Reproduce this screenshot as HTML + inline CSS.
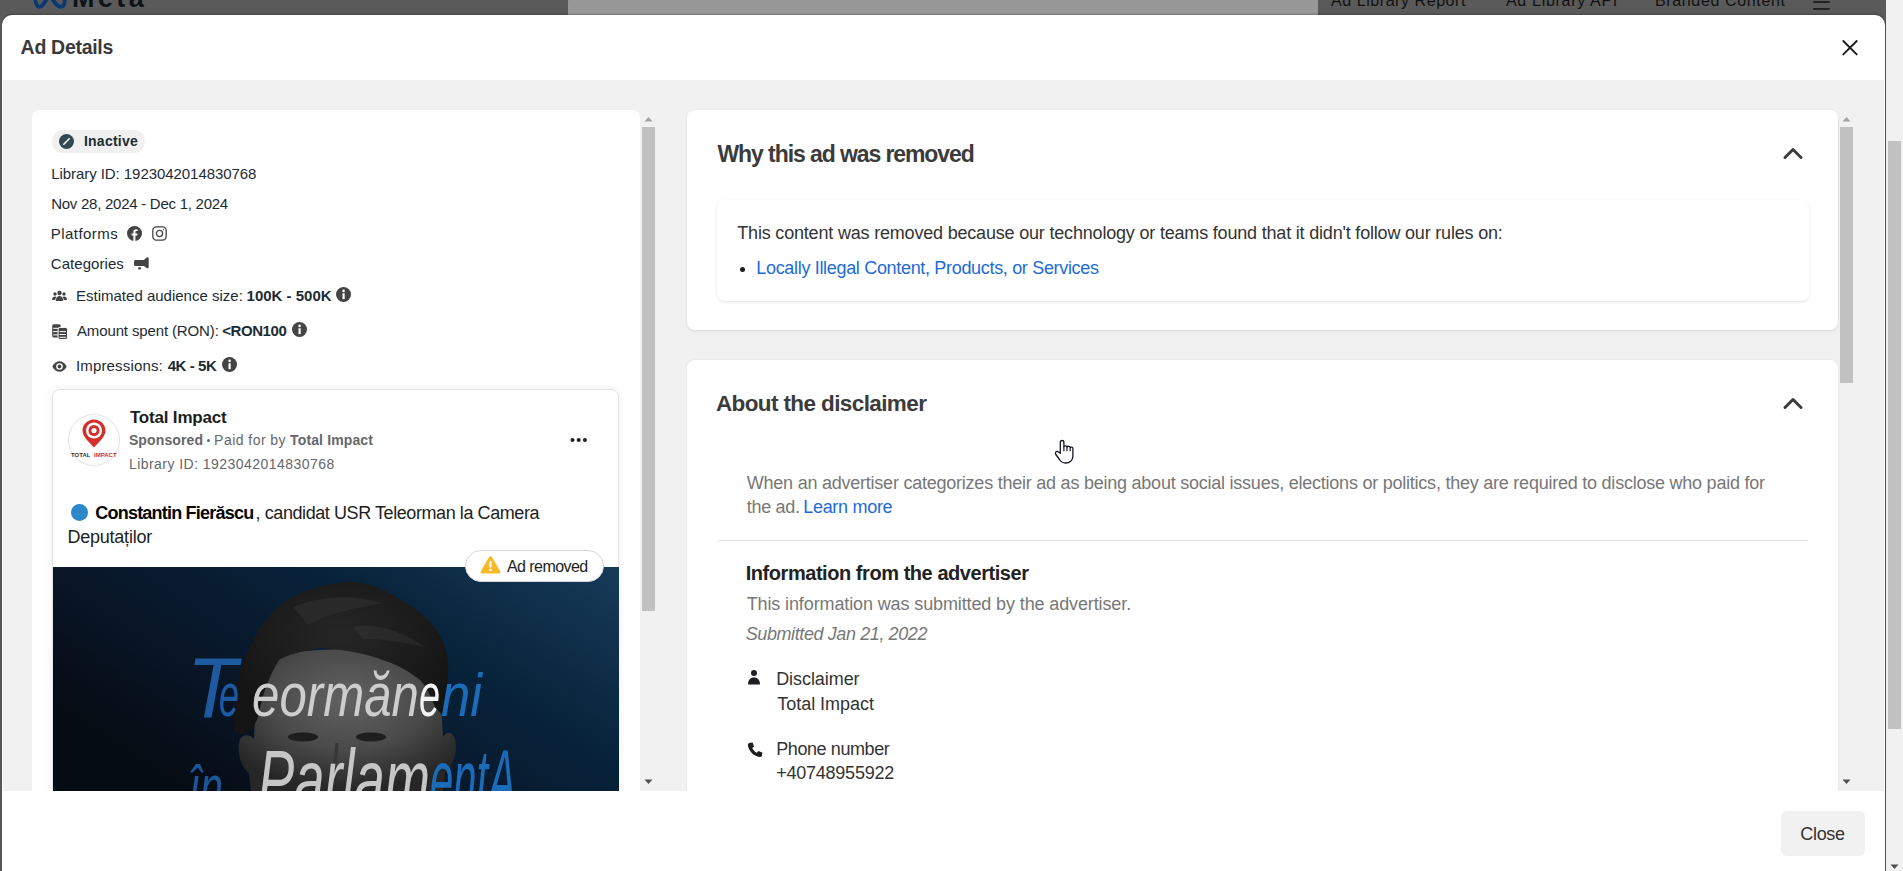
<!DOCTYPE html>
<html><head><meta charset="utf-8"><style>
html,body{margin:0;padding:0}
body{width:1903px;height:871px;overflow:hidden;position:relative;background:#5a5a5a;font-family:"Liberation Sans",sans-serif}
.t{position:absolute;white-space:nowrap;font-family:"Liberation Sans",sans-serif}
.abs{position:absolute}
</style></head><body>
<!-- dimmed page behind -->
<div class="abs" style="left:568px;top:-8px;width:750px;height:40px;background:#989898;border-radius:10px"></div>
<svg class="abs" style="left:0px;top:0px" width="80" height="15" viewBox="0 0 80 15"><path d="M34.9,-8 C34.9,2 36.5,6.8 39.5,6.8 C42.5,6.8 45,2 49.5,-5 M49,-7 C53,0 56.5,6.8 60.5,6.8 C63.5,6.8 65,3 65,-2 L65,-8" fill="none" stroke="#0a3873" stroke-width="3.9" stroke-linecap="round"/></svg>
<div class='t' style='left:72.00px;top:-15.16px;font-size:27px;line-height:27px;font-weight:700;font-style:normal;letter-spacing:3.400px;color:#0e1316'>Meta</div><div class='t' style='left:1331.00px;top:-6.84px;font-size:16px;line-height:16px;font-weight:400;font-style:normal;letter-spacing:0.562px;color:#121212'>Ad Library Report</div><div class='t' style='left:1506.00px;top:-6.84px;font-size:16px;line-height:16px;font-weight:400;font-style:normal;letter-spacing:0.692px;color:#121212'>Ad Library API</div><div class='t' style='left:1655.00px;top:-6.84px;font-size:16px;line-height:16px;font-weight:400;font-style:normal;letter-spacing:0.643px;color:#121212'>Branded Content</div>
<div class="abs" style="left:1813px;top:0.6px;width:16.5px;height:2px;background:#222;border-radius:1px"></div>
<div class="abs" style="left:1813px;top:8.1px;width:16.5px;height:2px;background:#222;border-radius:1px"></div>
<!-- page scrollbar -->
<div class="abs" style="left:1886px;top:0;width:17px;height:871px;background:#f1f1f1"></div>
<div class="abs" style="left:1888px;top:141px;width:13px;height:588px;background:#c1c1c1"></div>
<svg class="abs" style="left:1886px;top:854px" width="17" height="17"><path d="M4.5 10.5 L8.5 15 L12.5 10.5 Z" fill="#505050"/></svg>

<!-- modal -->
<div class="abs" style="left:2px;top:15px;width:1883px;height:900px;background:#fff;border-radius:10px 10px 0 0;box-shadow:0 -1px 2px rgba(0,0,0,0.25)"></div>
<div class="abs" style="left:3px;top:80px;width:1881px;height:711px;background:#f1f1f1"></div>
<svg class="abs" style="left:1835px;top:33px" width="30" height="30"><path d="M8.3 8 L21.7 21.4 M21.7 8 L8.3 21.4" stroke="#1c1e21" stroke-width="1.9" stroke-linecap="round"/></svg>

<!-- left panel -->
<div class="abs" style="left:32px;top:110px;width:608px;height:681px;background:#fff;border-radius:8px 8px 0 0"></div>
<div style='position:absolute;left:640px;top:110px;width:17px;height:681px;background:#f1f1f1'></div><div style='position:absolute;left:642px;top:127px;width:13px;height:484px;background:#c1c1c1'></div><svg style='position:absolute;left:640px;top:110px' width='17' height='17'><path d='M4.5 11.5 L8.5 7 L12.5 11.5 Z' fill='#a3a3a3'/></svg><svg style='position:absolute;left:640px;top:774px' width='17' height='17'><path d='M4.5 5.5 L8.5 10 L12.5 5.5 Z' fill='#505050'/></svg>
<div class="abs" style="left:52px;top:130px;width:93px;height:23px;background:#f0f0f0;border-radius:12px"></div>
<svg class="abs" style="left:59px;top:134px" width="15" height="15" viewBox="0 0 15 15"><circle cx="7.5" cy="7.5" r="7.5" fill="#344854"/><path d="M4.8 10.2 L10.2 4.8" stroke="#fff" stroke-width="1.6" stroke-linecap="round"/></svg>
<!-- platform icons -->
<svg class="abs" style="left:127px;top:226px" width="15" height="15" viewBox="0 0 15 15"><circle cx="7.5" cy="7.5" r="7.5" fill="#444444"/><path d="M8.4 15 V9.4 H10.2 L10.5 7.4 H8.4 V6.2 C8.4 5.6 8.7 5.1 9.6 5.1 H10.6 V3.4 C10.3 3.3 9.7 3.2 9 3.2 C7.4 3.2 6.4 4.2 6.4 5.9 V7.4 H4.6 V9.4 H6.4 V15 Z" fill="#fff"/></svg>
<svg class="abs" style="left:152px;top:226px" width="15" height="15" viewBox="0 0 15 15"><rect x="0.8" y="0.8" width="13.4" height="13.4" rx="3.6" fill="none" stroke="#444" stroke-width="1.3"/><circle cx="7.5" cy="7.5" r="3.1" fill="none" stroke="#444" stroke-width="1.3"/><circle cx="11.5" cy="3.5" r="0.7" fill="#444"/></svg>
<svg class="abs" style="left:133px;top:257px" width="17" height="14" viewBox="0 0 17 14"><path d="M2.5,2.9 L10.8,2.9 L14,0.3 C15.2,0.1 15.7,0.6 15.7,1.5 L15.7,10 C15.7,11 15.2,11.4 14,11.2 L10.8,8.9 L2.5,8.9 C1.6,8.9 1,8.3 1,7.4 L1,4.4 C1,3.5 1.6,2.9 2.5,2.9 Z" fill="#444"/><ellipse cx="6.6" cy="11.4" rx="1.7" ry="1.1" fill="#444"/></svg>
<!-- stats icons -->
<svg class="abs" style="left:52px;top:290px" width="15" height="12" viewBox="0 0 15 12"><circle cx="7.5" cy="3" r="2.2" fill="#444444"/><circle cx="3" cy="4" r="1.7" fill="#444444"/><circle cx="12" cy="4" r="1.7" fill="#444444"/><path d="M3.8 11 C3.8 7.5 5.5 6 7.5 6 C9.5 6 11.2 7.5 11.2 11 Z" fill="#444444"/><path d="M0 10 C0 7.5 1.2 6.5 3 6.5 C3.8 6.5 4.3 6.8 4.5 7 C3.6 8 3.3 9 3.3 10 Z" fill="#444444"/><path d="M15 10 C15 7.5 13.8 6.5 12 6.5 C11.2 6.5 10.7 6.8 10.5 7 C11.4 8 11.7 9 11.7 10 Z" fill="#444444"/></svg>
<svg class="abs" style="left:52px;top:324px" width="16" height="16" viewBox="0 0 16 16"><rect x="0.2" y="0.2" width="8.5" height="13.2" rx="1.6" fill="#444"/><path d="M1.2 4.3 H7.7 M1.2 7.6 H7.7 M1.2 10.9 H6.6" stroke="#fff" stroke-width="1"/><rect x="6.1" y="3.4" width="9.4" height="12.1" rx="1.8" fill="#444" stroke="#fff" stroke-width="1"/><path d="M7.6 7.6 H14 M7.6 10.5 H14 M7.6 13.3 H14" stroke="#fff" stroke-width="1"/></svg>
<svg class="abs" style="left:52px;top:361px" width="15" height="11" viewBox="0 0 15 11"><path d="M0.3 5.5 C2.3 1.6 4.9 0.3 7.5 0.3 C10.1 0.3 12.7 1.6 14.7 5.5 C12.7 9.4 10.1 10.7 7.5 10.7 C4.9 10.7 2.3 9.4 0.3 5.5 Z" fill="#444"/><circle cx="7.5" cy="5.5" r="3.3" fill="#fff"/><circle cx="7.5" cy="5.5" r="1.9" fill="#444"/></svg>
<svg class="abs" style="left:336px;top:287px" width="15" height="15" viewBox="0 0 15 15"><circle cx="7.5" cy="7.5" r="7.5" fill="#444444"/><rect x="6.5" y="6.3" width="2.2" height="5.8" fill="#fff"/><circle cx="7.6" cy="3.9" r="1.3" fill="#fff"/></svg>
<svg class="abs" style="left:292px;top:322px" width="15" height="15" viewBox="0 0 15 15"><circle cx="7.5" cy="7.5" r="7.5" fill="#444444"/><rect x="6.5" y="6.3" width="2.2" height="5.8" fill="#fff"/><circle cx="7.6" cy="3.9" r="1.3" fill="#fff"/></svg>
<svg class="abs" style="left:222px;top:357px" width="15" height="15" viewBox="0 0 15 15"><circle cx="7.5" cy="7.5" r="7.5" fill="#444444"/><rect x="6.5" y="6.3" width="2.2" height="5.8" fill="#fff"/><circle cx="7.6" cy="3.9" r="1.3" fill="#fff"/></svg>

<!-- ad card -->
<div class="abs" style="left:52px;top:389px;width:567px;height:420px;background:#fff;border:1px solid #e3e5e8;border-radius:8px;box-shadow:0 0 8px rgba(0,0,0,0.07);box-sizing:border-box"></div>
<div class="abs" style="left:68px;top:414px;width:52px;height:52px;border-radius:50%;border:1px solid #e3e3e3;box-sizing:border-box;background:#fff"></div>
<svg class="abs" style="left:68px;top:414px" width="52" height="52" viewBox="0 0 52 52">
 <path d="M26 5.5 C19.5 5.5 14.5 10.5 14.5 16.5 C14.5 23 22 29 26 33.5 C30 29 37.5 23 37.5 16.5 C37.5 10.5 32.5 5.5 26 5.5 Z" fill="#d32f2f"/>
 <circle cx="26" cy="16.5" r="8" fill="#fff"/><circle cx="26" cy="16.5" r="5.5" fill="#d32f2f"/><circle cx="26" cy="16.5" r="2.6" fill="#fff"/>
 <text x="3" y="43" font-family="Liberation Sans" font-size="6" font-weight="700" fill="#333">TOTAL</text>
 <text x="26" y="43" font-family="Liberation Sans" font-size="6" font-weight="700" fill="#d32f2f">IMPACT</text>
</svg>
<svg class="abs" style="left:570px;top:436px" width="18" height="8"><circle cx="2.5" cy="4" r="2" fill="#1c1e21"/><circle cx="8.7" cy="4" r="2" fill="#1c1e21"/><circle cx="14.9" cy="4" r="2" fill="#1c1e21"/></svg>
<div class="abs" style="left:207.3px;top:438.8px;width:3px;height:3px;border-radius:50%;background:#65676b"></div>
<div class="abs" style="left:71px;top:504px;width:17px;height:17px;border-radius:50%;background:#2d88c9"></div>
<!-- ad image -->
<svg class="abs" style="left:53px;top:567px" width="566" height="224" viewBox="0 0 566 224">
 <defs>
  <linearGradient id="bgg" x1="0" y1="0.6" x2="1" y2="0">
   <stop offset="0" stop-color="#060c14"/><stop offset="0.3" stop-color="#09172a"/><stop offset="0.6" stop-color="#072239"/><stop offset="1" stop-color="#173b5a"/>
  </linearGradient>
  <radialGradient id="face" cx="0.5" cy="0.35" r="0.65">
   <stop offset="0" stop-color="#626262"/><stop offset="0.55" stop-color="#4a4a4a"/><stop offset="1" stop-color="#262626"/>
  </radialGradient>
  <radialGradient id="hair" cx="0.5" cy="0.35" r="0.6">
   <stop offset="0" stop-color="#262626"/><stop offset="1" stop-color="#141414"/>
  </radialGradient>
 </defs>
 <rect width="566" height="224" fill="url(#bgg)"/>
 <path d="M198 224 L196 206 C188 200 183 184 187 172 C191 166 197 168 201 172 L204 95 C232 78 356 78 386 95 L390 170 C394 164 399 164 402 172 C405 184 400 200 392 206 L390 224 Z" fill="url(#face)"/>
 <path d="M181 165 C181 130 186 100 195 85 C203 65 212 52 225 40 C242 26 262 18 298 14.5 C322 16 348 30 371 49 C386 62 393 78 395 94 C396 112 394 130 391 150 L382 140 C376 124 370 114 363 110 C350 100 336 94 310 87 C290 83 272 80 264 82 C248 84 234 88 226 93 C217 108 210 124 205 150 C200 165 190 170 181 165 Z" fill="url(#hair)"/>
 <path d="M240 40 C262 30 300 26 330 36 C310 40 280 44 255 58 Z" fill="#363636" opacity="0.45"/>
 <path d="M300 60 C325 55 350 65 372 80 C350 75 330 72 310 72 Z" fill="#3a3a3a" opacity="0.4"/>
 <ellipse cx="250" cy="170" rx="15" ry="4.5" fill="#1e1e1e"/>
 <ellipse cx="318" cy="170" rx="15" ry="4.5" fill="#1e1e1e"/>
 <path d="M284 176 L281 205 L289 212" fill="none" stroke="#363636" stroke-width="3"/>
 <g font-family="Liberation Sans" font-style="italic">
  <text x="134" y="150" font-size="86" fill="#1d5a9f" textLength="50" lengthAdjust="spacingAndGlyphs">T</text>
  <text x="166" y="149" font-size="62" fill="#1d5a9f" textLength="20" lengthAdjust="spacingAndGlyphs">e</text>
  <text x="199" y="149" font-size="62" fill="#cdcdcd" textLength="167" lengthAdjust="spacingAndGlyphs">eormăn</text>
  <text x="366" y="149" font-size="62" fill="#f4f4f4" textLength="21" lengthAdjust="spacingAndGlyphs">e</text>
  <text x="388" y="149" font-size="62" fill="#1b6cb8" textLength="41" lengthAdjust="spacingAndGlyphs">ni</text>
  <text x="136" y="241" font-size="62" fill="#1b5699" textLength="34" lengthAdjust="spacingAndGlyphs">în</text>
  <text x="205" y="241" font-size="84" fill="#c6c6c6" textLength="172" lengthAdjust="spacingAndGlyphs">Parlam</text>
  <text x="377" y="241" font-size="84" fill="#1b6cb8" textLength="86" lengthAdjust="spacingAndGlyphs">entA</text>
 </g>
</svg>
<div class="abs" style="left:465px;top:550px;width:139px;height:32px;background:#fff;border:1px solid #d5d7db;border-radius:16px;box-sizing:border-box"></div>
<svg class="abs" style="left:480px;top:555px" width="21" height="19" viewBox="0 0 21 19"><path d="M10.5 1.2 C11.2 1.2 11.7 1.6 12 2.1 L20.2 16.3 C20.8 17.4 20.1 18.5 18.9 18.5 H2.1 C0.9 18.5 0.2 17.4 0.8 16.3 L9 2.1 C9.3 1.6 9.8 1.2 10.5 1.2 Z" fill="#f7b928"/><rect x="9.4" y="6" width="2.2" height="6.5" rx="1" fill="#fff"/><circle cx="10.5" cy="15" r="1.2" fill="#fff"/></svg>

<!-- right panel -->
<div style='position:absolute;left:1838px;top:110px;width:17px;height:681px;background:#f1f1f1'></div><div style='position:absolute;left:1840px;top:127px;width:13px;height:256px;background:#c1c1c1'></div><svg style='position:absolute;left:1838px;top:110px' width='17' height='17'><path d='M4.5 11.5 L8.5 7 L12.5 11.5 Z' fill='#a3a3a3'/></svg><svg style='position:absolute;left:1838px;top:774px' width='17' height='17'><path d='M4.5 5.5 L8.5 10 L12.5 5.5 Z' fill='#505050'/></svg>
<div class="abs" style="left:687px;top:110px;width:1151px;height:220px;background:#fff;border-radius:8px;box-shadow:0 1px 3px rgba(0,0,0,0.1)"></div>
<div class="abs" style="left:716.5px;top:199.5px;width:1092px;height:101px;background:#fff;border-radius:8px;box-shadow:0 1px 3px rgba(0,0,0,0.12)"></div>
<svg class="abs" style="left:1780px;top:142px" width="26" height="22"><path d="M5 15.5 L13 7.5 L21 15.5" fill="none" stroke="#3b3b3b" stroke-width="3" stroke-linecap="round" stroke-linejoin="round"/></svg>
<div class="abs" style="left:740px;top:267px;width:5px;height:5px;border-radius:50%;background:#1c1e21"></div>
<div class="abs" style="left:687px;top:360px;width:1151px;height:431px;background:#fff;border-radius:8px 8px 0 0;box-shadow:0 0 3px rgba(0,0,0,0.08)"></div>
<svg class="abs" style="left:1780px;top:392px" width="26" height="22"><path d="M5 15.5 L13 7.5 L21 15.5" fill="none" stroke="#3b3b3b" stroke-width="3" stroke-linecap="round" stroke-linejoin="round"/></svg>
<div class="abs" style="left:717px;top:540px;width:1091px;height:1px;background:#e3e3e3"></div>
<svg class="abs" style="left:746px;top:669px" width="16" height="16" viewBox="0 0 16 16"><circle cx="8" cy="4" r="3" fill="#1c1e21"/><path d="M2 15.5 C2 11 4.5 8.5 8 8.5 C11.5 8.5 14 11 14 15.5 Z" fill="#1c1e21"/></svg>
<svg class="abs" style="left:747px;top:742px" width="16" height="16" viewBox="0 0 16 16"><path d="M3.2 0.8 L5.6 0.5 L7 4.5 L5.3 6 C6.2 8 7.8 9.8 9.8 10.8 L11.4 9.1 L15.3 10.6 L15 13.2 C14.8 14.4 13.8 15.2 12.6 15 C6.4 14 1.8 9.4 0.9 3.3 C0.7 2 1.8 1 3.2 0.8 Z" fill="#1c1e21"/></svg>

<div class='t' style='left:20.60px;top:37.69px;font-size:19.5px;line-height:19.5px;font-weight:700;font-style:normal;letter-spacing:-0.300px;color:#3a3a3a'>Ad Details</div><div class='t' style='left:83.90px;top:133.95px;font-size:14px;line-height:14px;font-weight:700;font-style:normal;letter-spacing:0.257px;color:#1c2b33'>Inactive</div><div class='t' style='left:51.20px;top:166.10px;font-size:15px;line-height:15px;font-weight:400;font-style:normal;letter-spacing:-0.059px;color:#1c2b33'>Library ID: 1923042014830768</div><div class='t' style='left:51.20px;top:196.10px;font-size:15px;line-height:15px;font-weight:400;font-style:normal;letter-spacing:-0.260px;color:#1c2b33'>Nov 28, 2024 - Dec 1, 2024</div><div class='t' style='left:50.80px;top:226.40px;font-size:15px;line-height:15px;font-weight:400;font-style:normal;letter-spacing:0.438px;color:#1c2b33'>Platforms</div><div class='t' style='left:50.80px;top:256.20px;font-size:15px;line-height:15px;font-weight:400;font-style:normal;letter-spacing:0.056px;color:#1c2b33'>Categories</div><div class='t' style='left:76.00px;top:288.30px;font-size:15px;line-height:15px;font-weight:400;font-style:normal;letter-spacing:0.004px;color:#1c2b33'>Estimated audience size:</div><div class='t' style='left:246.60px;top:288.30px;font-size:15px;line-height:15px;font-weight:700;font-style:normal;letter-spacing:-0.010px;color:#1c2b33'>100K - 500K</div><div class='t' style='left:77.00px;top:322.80px;font-size:15px;line-height:15px;font-weight:400;font-style:normal;letter-spacing:-0.133px;color:#1c2b33'>Amount spent (RON):</div><div class='t' style='left:222.20px;top:322.80px;font-size:15px;line-height:15px;font-weight:700;font-style:normal;letter-spacing:-0.422px;color:#1c2b33'>&lt;RON100</div><div class='t' style='left:76.00px;top:358.10px;font-size:15px;line-height:15px;font-weight:400;font-style:normal;letter-spacing:0.155px;color:#1c2b33'>Impressions:</div><div class='t' style='left:167.70px;top:358.10px;font-size:15px;line-height:15px;font-weight:700;font-style:normal;letter-spacing:-0.433px;color:#1c2b33'>4K - 5K</div><div class='t' style='left:129.90px;top:409.41px;font-size:17px;line-height:17px;font-weight:700;font-style:normal;letter-spacing:-0.182px;color:#1c1e21'>Total Impact</div><div class='t' style='left:128.90px;top:432.85px;font-size:14px;line-height:14px;font-weight:700;font-style:normal;letter-spacing:0.125px;color:#65676b'>Sponsored</div><div class='t' style='left:214.10px;top:432.85px;font-size:14px;line-height:14px;font-weight:400;font-style:normal;letter-spacing:0.460px;color:#65676b'>Paid for by</div><div class='t' style='left:290.10px;top:432.85px;font-size:14px;line-height:14px;font-weight:700;font-style:normal;letter-spacing:0.127px;color:#65676b'>Total Impact</div><div class='t' style='left:128.90px;top:457.45px;font-size:14px;line-height:14px;font-weight:400;font-style:normal;letter-spacing:0.456px;color:#65676b'>Library ID: 1923042014830768</div><div class='t' style='left:95.30px;top:503.66px;font-size:18px;line-height:18px;font-weight:700;font-style:normal;letter-spacing:-0.789px;color:#050505'>Constantin Fierăscu</div><div class='t' style='left:255.60px;top:503.66px;font-size:18px;line-height:18px;font-weight:400;font-style:normal;letter-spacing:-0.421px;color:#1c1e21'>, candidat USR Teleorman la Camera</div><div class='t' style='left:67.40px;top:528.36px;font-size:18px;line-height:18px;font-weight:400;font-style:normal;letter-spacing:-0.220px;color:#1c1e21'>Deputaților</div><div class='t' style='left:507.00px;top:558.86px;font-size:16px;line-height:16px;font-weight:400;font-style:normal;letter-spacing:-0.556px;color:#1c1e21'>Ad removed</div><div class='t' style='left:717.50px;top:142.73px;font-size:23px;line-height:23px;font-weight:700;font-style:normal;letter-spacing:-1.086px;color:#3b3b3b'>Why this ad was removed</div><div class='t' style='left:737.30px;top:223.56px;font-size:18px;line-height:18px;font-weight:400;font-style:normal;letter-spacing:-0.189px;color:#333333'>This content was removed because our technology or teams found that it didn't follow our rules on:</div><div class='t' style='left:756.30px;top:258.66px;font-size:18px;line-height:18px;font-weight:400;font-style:normal;letter-spacing:-0.322px;color:#1d6bd6'>Locally Illegal Content, Products, or Services</div><div class='t' style='left:715.90px;top:392.85px;font-size:22.5px;line-height:22.5px;font-weight:700;font-style:normal;letter-spacing:-0.605px;color:#3b3b3b'>About the disclaimer</div><div class='t' style='left:746.80px;top:473.56px;font-size:18px;line-height:18px;font-weight:400;font-style:normal;letter-spacing:-0.234px;color:#777777'>When an advertiser categorizes their ad as being about social issues, elections or politics, they are required to disclose who paid for</div><div class='t' style='left:746.80px;top:498.36px;font-size:18px;line-height:18px;font-weight:400;font-style:normal;letter-spacing:-0.317px;color:#777777'>the ad.</div><div class='t' style='left:803.20px;top:498.36px;font-size:18px;line-height:18px;font-weight:400;font-style:normal;letter-spacing:-0.289px;color:#1d6bd6'>Learn more</div><div class='t' style='left:745.70px;top:563.07px;font-size:20px;line-height:20px;font-weight:700;font-style:normal;letter-spacing:-0.447px;color:#222222'>Information from the advertiser</div><div class='t' style='left:746.70px;top:594.96px;font-size:18px;line-height:18px;font-weight:400;font-style:normal;letter-spacing:-0.119px;color:#777777'>This information was submitted by the advertiser.</div><div class='t' style='left:745.70px;top:624.66px;font-size:18px;line-height:18px;font-weight:400;font-style:italic;letter-spacing:-0.400px;color:#777777'>Submitted Jan 21, 2022</div><div class='t' style='left:776.20px;top:669.76px;font-size:18px;line-height:18px;font-weight:400;font-style:normal;letter-spacing:-0.067px;color:#333333'>Disclaimer</div><div class='t' style='left:777.20px;top:694.86px;font-size:18px;line-height:18px;font-weight:400;font-style:normal;letter-spacing:-0.018px;color:#333333'>Total Impact</div><div class='t' style='left:776.20px;top:739.96px;font-size:18px;line-height:18px;font-weight:400;font-style:normal;letter-spacing:-0.409px;color:#333333'>Phone number</div><div class='t' style='left:776.20px;top:764.16px;font-size:18px;line-height:18px;font-weight:400;font-style:normal;letter-spacing:-0.236px;color:#333333'>+40748955922</div>

<!-- footer -->
<div class="abs" style="left:2px;top:791px;width:1883px;height:80px;background:#fff"></div>
<div class="abs" style="left:1781px;top:811px;width:84px;height:45px;background:#f1f1f1;border-radius:6px;z-index:0"></div>
<div class="t" style="left:1800.20px;top:824.76px;font-size:18px;line-height:18px;letter-spacing:-0.275px;color:#333">Close</div>
<svg class="abs" style="left:1054px;top:438.7px" width="21" height="26" viewBox="0 0 21 26"><path d="M6.3,14.3 L6.3,3 C6.3,1 9.9,1 9.9,3 L9.9,7.5 C10.5,6.5 12.8,6.5 13,7.8 C13.5,7 16,7 16.2,8.5 C16.8,7.8 18.9,8 18.9,9.8 L18.9,17 C18.9,21.5 15.5,24 11.5,24 C9,24 7,23 5.5,20.5 L1.8,15.5 C0.8,14 1.8,12 3.8,12.5 Z" fill="#fff" stroke="#161629" stroke-width="1.3" stroke-linejoin="round"/><path d="M9.9,7.5 L9.9,11.7 M13,7.8 L13,11.7 M16.2,8.5 L16.2,11.7" stroke="#161629" stroke-width="1.2" stroke-linecap="round"/></svg>
</body></html>
